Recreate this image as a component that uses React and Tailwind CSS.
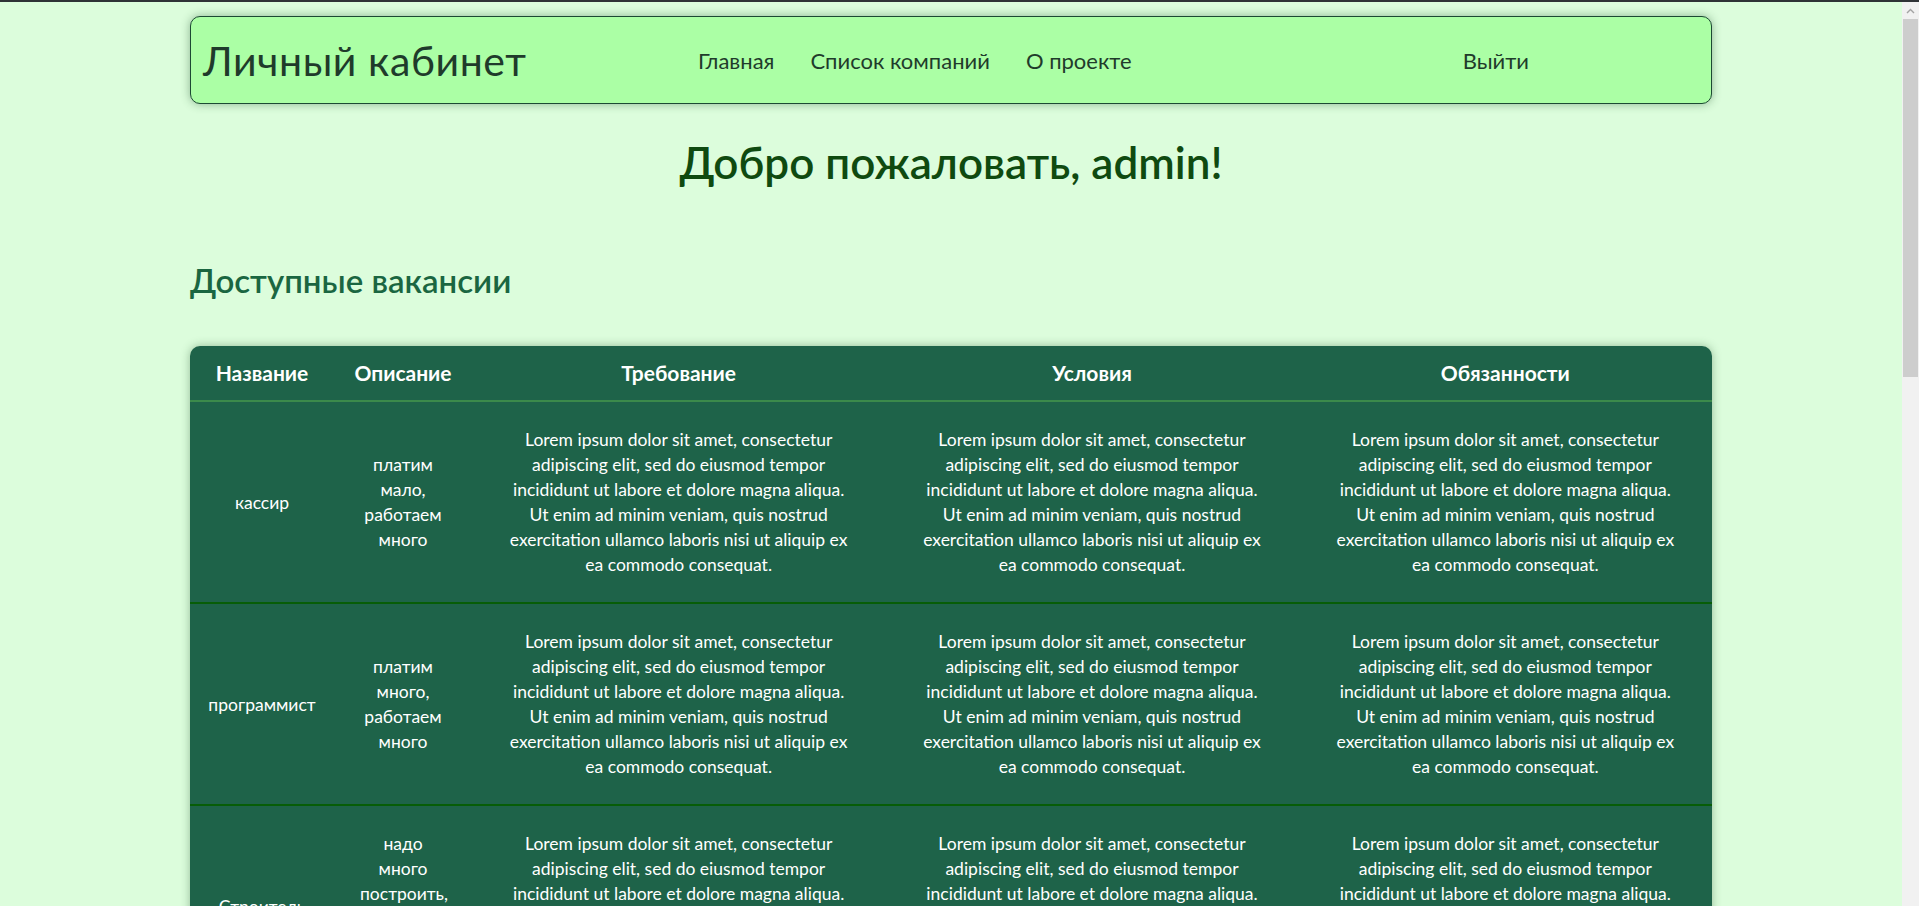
import React from "react";

const lorem =
  "Lorem ipsum dolor sit amet, consectetur adipiscing elit, sed do eiusmod tempor incididunt ut labore et dolore magna aliqua. Ut enim ad minim veniam, quis nostrud exercitation ullamco laboris nisi ut aliquip ex ea commodo consequat.";

const vacancies = [
  { name: "кассир", desc: "платим мало, работаем много" },
  { name: "программист", desc: "платим много, работаем много" },
  { name: "Строитель", desc: "надо много построить, работаем очень много" },
  { name: "курьер", desc: "платим мало, ходим много" },
];

const Navbar = () => {
  return (
    <div className="flex h-[88px] items-center rounded-[10px] border border-[#1c4a33] bg-[#abffa5] px-3 shadow-[0_0_10px_rgba(40,90,50,0.45)]">
      <a className="w-[495px] shrink-0 text-[41px] leading-none tracking-[0.6px] text-[#1f3b2b]">
        Личный кабинет
      </a>
      <ul className="flex gap-[36px] text-[22px] text-[#1f3b2b]">
        <li>
          <a>Главная</a>
        </li>
        <li>
          <a>Список компаний</a>
        </li>
        <li>
          <a>О проекте</a>
        </li>
      </ul>
      <a className="ml-auto mr-[170px] text-[22px] text-[#1f3b2b]">Выйти</a>
    </div>
  );
};

// browser scrollbar from the screenshot
const Scrollbar = () => (
  <div className="w-[17px] shrink-0 bg-[#f1f1f1]">
    <div className="flex h-[17px] items-center justify-center">
      <svg width="9" height="6" viewBox="0 0 9 6">
        <path d="M1 5 L4.5 1.5 L8 5" fill="none" stroke="#a3a3a3" strokeWidth="1.4" />
      </svg>
    </div>
    <div className="mx-[1px] h-[358px] bg-[#cdcdcd]"></div>
  </div>
);

const App = () => {
  return (
    <div
      className="min-h-screen bg-[#dcfddc]"
      style={{ fontFamily: "Lato, 'Noto Sans', sans-serif" }}
    >
      <div className="h-[2px] bg-[#2f3336]"></div>
      <div className="flex">
        <div className="min-w-0 flex-1">
          <div className="mx-auto w-[1522px] pb-10 pt-[14px]">
            <Navbar />

            <h1 className="mt-[34px] text-center text-[44px] font-semibold leading-[48px] text-[#0f4a10]">
              Добро пожаловать, admin!
            </h1>

            <h2 className="mt-[76px] text-[33px] font-semibold leading-[36px] text-[#1a6641]">
              Доступные вакансии
            </h2>

            <div className="mt-[48px] overflow-hidden rounded-[10px] bg-[#1e6349] shadow-[0_0_10px_rgba(40,90,50,0.4)]">
              <table className="w-full table-fixed border-collapse text-center text-white">
                <colgroup>
                  <col className="w-[144px]" />
                  <col className="w-[138px]" />
                  <col />
                  <col />
                  <col />
                </colgroup>
                <thead>
                  <tr className="border-b-2 border-[#3b8a4b]">
                    <th className="py-[14px] text-[21px] font-bold leading-[26px]">Название</th>
                    <th className="py-[14px] text-[21px] font-bold leading-[26px]">Описание</th>
                    <th className="py-[14px] text-[21px] font-bold leading-[26px]">Требование</th>
                    <th className="py-[14px] text-[21px] font-bold leading-[26px]">Условия</th>
                    <th className="py-[14px] text-[21px] font-bold leading-[26px]">Обязанности</th>
                  </tr>
                </thead>
                <tbody className="text-[17.5px] leading-[25px]">
                  {vacancies.map((v) => (
                    <tr key={v.name} className="border-b-2 border-[#075d07]">
                      <td className="px-2 py-[25px]">{v.name}</td>
                      <td className="px-[26px] py-[25px]">{v.desc}</td>
                      <td className="px-[32px] py-[25px]">{lorem}</td>
                      <td className="px-[32px] py-[25px]">{lorem}</td>
                      <td className="px-[32px] py-[25px]">{lorem}</td>
                    </tr>
                  ))}
                </tbody>
              </table>
            </div>
          </div>
        </div>
        <Scrollbar />
      </div>
    </div>
  );
};

export default App;
